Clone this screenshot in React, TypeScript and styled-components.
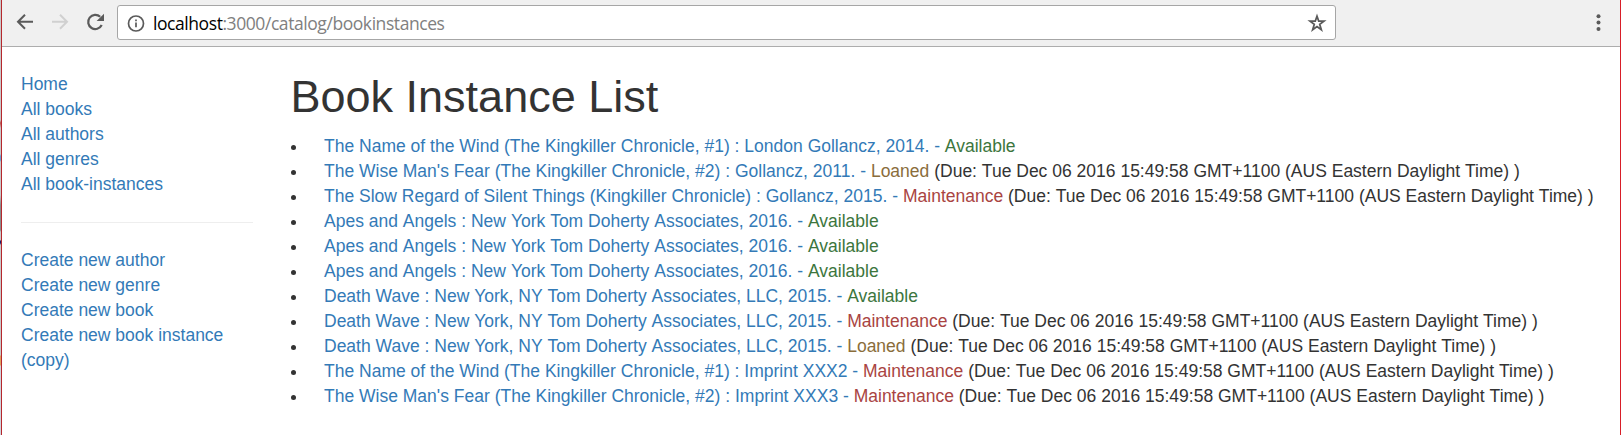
import React, { Fragment } from "react";
import styled, { createGlobalStyle } from "styled-components";

const GlobalStyle = createGlobalStyle`
  *, *::before { box-sizing: border-box; }
  body {
    margin: 0;
    background: #fff;
    color: #333;
    font: 17.5px/25px "Liberation Sans", Arial, sans-serif;
  }
`;

const BrowserWindow = styled.div`
  display: flex;
  flex-direction: column;
  height: 435px;
  overflow: hidden;
  padding-left: 1px;
  background: linear-gradient(
    #c9c9c9 120px, #c0504d 123px, #c9c9c9 128px, #c9c9c9 154px,
    #6fa0d0 156px, #6fa0d0 160px, #c9c9c9 162px, #c9c9c9 195px,
    #8c8c8c 205px, #8c8c8c 230px, #c9c9c9 232px, #c9c9c9 240px,
    #20206a 241px, #20206a 243px, #c9c9c9 245px, #c9c9c9 355px,
    #e0a060 356px, #e0a060 365px, #d0d4dc 366px
  );
`;

const Frame = styled.div`
  display: flex;
  flex-direction: column;
  flex: 1;
  background: #fff;
  border-left: 1px solid #b5282d;
  border-right: 1px solid #d81e28;
`;

const Toolbar = styled.header`
  display: flex;
  align-items: flex-start;
  height: 47px;
  padding: 5px 14px 0 13px;
  background: #f0f0f0;
  border-bottom: 1px solid #adadad;
`;

const NavButtons = styled.div`
  display: flex;
  gap: 11px;
  padding-top: 5px;
  width: 102px;
`;

const Glyph = styled.svg<{ $size: number }>`
  display: block;
  flex: none;
  width: ${(p) => p.$size}px;
  height: ${(p) => p.$size}px;
`;

const AddressBar = styled.div`
  display: flex;
  align-items: center;
  width: 1219px;
  height: 35px;
  padding: 0 8px;
  background: #fff;
  border: 1px solid #a6a6a6;
  border-radius: 3px;
`;

const Url = styled.span`
  flex: 1;
  padding-left: 7px;
  font: 17.5px/24px "Open Sans", "Noto Sans", sans-serif;
  letter-spacing: -0.43px;
  color: #808080;
`;

const Host = styled.span`
  color: #000;
`;

const MenuButton = styled.div`
  margin-left: auto;
  padding-top: 6px;
`;

const Page = styled.div`
  display: flex;
  flex: 1;
  padding-left: 19px;
`;

const Sidebar = styled.nav`
  width: 232px;
  padding-top: 25px;
`;

const LinkList = styled.ul`
  list-style: none;
  margin: 0;
  padding: 0;
`;

const Link = styled.a`
  color: #337ab7;
  text-decoration: none;
`;

const Divider = styled.hr`
  margin: 25px 0;
  border: 0;
  border-top: 1px solid #eee;
`;

const Main = styled.main`
  flex: 1;
  padding: 25px 0 0 36px;
  white-space: nowrap;
`;

const Title = styled.h1`
  margin: 0 0 13px;
  padding-left: 1.5px;
  font-size: 45px;
  font-weight: 400;
  line-height: 49px;
`;

const InstanceRow = styled.li`
  display: flex;
  align-items: center;
  padding-left: 2px;
  white-space: pre;

  &::before {
    content: "";
    width: 5px;
    height: 5px;
    margin: 1px 28px 0 0;
    border-radius: 50%;
    background: #333;
  }
`;

/* Each word is shaped alone, so no kerning is applied against the spaces. */
const Word = styled.span`
  display: inline-block;
`;

const Words = ({ children }: { children: string }) => (
  <>
    {children.split(" ").map((word, index) => (
      <Fragment key={index}>
        {index > 0 && " "}
        {word && <Word>{word}</Word>}
      </Fragment>
    ))}
  </>
);

type StatusName = "Available" | "Loaned" | "Maintenance";

const statusColors: Record<StatusName, string> = {
  Available: "#3c763d",
  Loaned: "#8a6d3b",
  Maintenance: "#a94442",
};

const Status = styled.span<{ $status: StatusName }>`
  color: ${(p) => statusColors[p.$status]};
`;

const due = "Tue Dec 06 2016 15:49:58 GMT+1100 (AUS Eastern Daylight Time)";

const instances: [string, StatusName][] = [
  ["The Name of the Wind (The Kingkiller Chronicle, #1) : London Gollancz, 2014.", "Available"],
  ["The Wise Man's Fear (The Kingkiller Chronicle, #2) : Gollancz, 2011.", "Loaned"],
  ["The Slow Regard of Silent Things (Kingkiller Chronicle) : Gollancz, 2015.", "Maintenance"],
  ["Apes and Angels : New York Tom Doherty Associates, 2016.", "Available"],
  ["Apes and Angels : New York Tom Doherty Associates, 2016.", "Available"],
  ["Apes and Angels : New York Tom Doherty Associates, 2016.", "Available"],
  ["Death Wave : New York, NY Tom Doherty Associates, LLC, 2015.", "Available"],
  ["Death Wave : New York, NY Tom Doherty Associates, LLC, 2015.", "Maintenance"],
  ["Death Wave : New York, NY Tom Doherty Associates, LLC, 2015.", "Loaned"],
  ["The Name of the Wind (The Kingkiller Chronicle, #1) : Imprint XXX2", "Maintenance"],
  ["The Wise Man's Fear (The Kingkiller Chronicle, #2) : Imprint XXX3", "Maintenance"],
];

const browseLinks = ["Home", "All books", "All authors", "All genres", "All book-instances"];
const createLinks = [
  "Create new author",
  "Create new genre",
  "Create new book",
  "Create new book instance (copy)",
];

const Links = ({ items }: { items: string[] }) => (
  <LinkList>
    {items.map((item) => (
      <li key={item}>
        <Link>{item}</Link>
      </li>
    ))}
  </LinkList>
);

const BrowserToolbar = () => (
  <Toolbar>
    <NavButtons>
      <Glyph $size={24} viewBox="0 0 24 24" fill="none" stroke="#5a5a5a" strokeWidth="2">
        <path d="M18 11.7H3.5M10 4.7l-7 7 7 7" />
      </Glyph>
      <Glyph $size={24} viewBox="0 0 24 24" fill="none" stroke="#d0d0d0" strokeWidth="2">
        <path d="M2 11.7h14.5M10 4.7l7 7-7 7" />
      </Glyph>
      <Glyph $size={24} viewBox="0 0 24 24">
        <path d="M16.7 15A7.1 7.1 0 1 1 15.2 6.8" fill="none" stroke="#5a5a5a" strokeWidth="2.2" />
        <path d="M19 3.8v7.2h-7.4z" fill="#5a5a5a" />
      </Glyph>
    </NavButtons>
    <AddressBar>
      <Glyph $size={20} viewBox="0 0 20 20" fill="none" stroke="#5a5a5a">
        <circle cx="10" cy="10.5" r="7.5" strokeWidth="1.7" />
        <path d="M10 9.6v4.6M10 6.4v1.8" strokeWidth="1.7" />
      </Glyph>
      <Url>
        <Host>localhost</Host>:3000/catalog/bookinstances
      </Url>
      <Glyph $size={20} viewBox="0 0 20 20" fill="none" stroke="#5a5a5a" strokeWidth="1.8">
        <path d="M10 3.2l1.75 5h5.2l-4.2 3.2 1.55 5.3L10 13.5l-4.3 3.2 1.55-5.3-4.2-3.2h5.2z" />
      </Glyph>
    </AddressBar>
    <MenuButton>
      <Glyph $size={22} viewBox="0 0 22 22" fill="#5a5a5a">
        <circle cx="14.5" cy="5.2" r="2" />
        <circle cx="14.5" cy="11.6" r="2" />
        <circle cx="14.5" cy="17.9" r="2" />
      </Glyph>
    </MenuButton>
  </Toolbar>
);

export default function App() {
  return (
    <BrowserWindow>
      <GlobalStyle />
      <Frame>
        <BrowserToolbar />
        <Page>
          <Sidebar>
            <Links items={browseLinks} />
            <Divider />
            <Links items={createLinks} />
          </Sidebar>
          <Main>
            <Title>Book Instance List</Title>
            <LinkList>
              {instances.map(([title, status], index) => (
                <InstanceRow key={index}>
                  <Link>
                    <Words>{`${title} - `}</Words>
                  </Link>
                  <Status $status={status}>{status}</Status>
                  {status !== "Available" && (
                    <span>
                      <Words>{` (Due: ${due} )`}</Words>
                    </span>
                  )}
                </InstanceRow>
              ))}
            </LinkList>
          </Main>
        </Page>
      </Frame>
    </BrowserWindow>
  );
}
